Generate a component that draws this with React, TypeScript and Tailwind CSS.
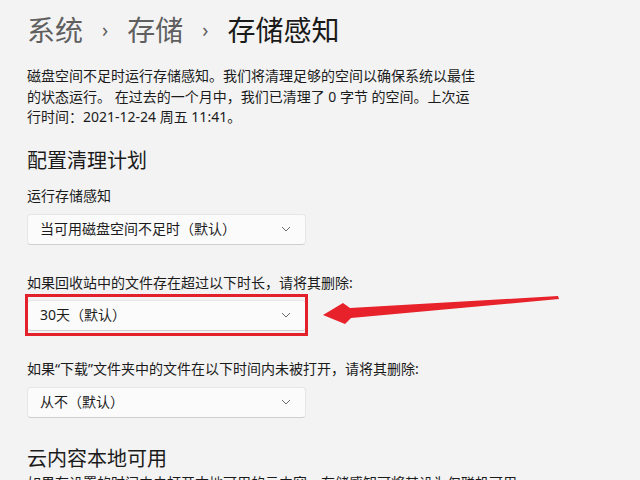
import React from "react";

const font = { fontFamily: '"Noto Sans", "Noto Sans CJK SC", sans-serif' };

function Chevron() {
  return (
    <svg width="10" height="6" viewBox="0 0 10 6" className="shrink-0">
      <path d="M1 1 L5 5 L9 1" fill="none" stroke="#6b6b6b" strokeWidth="1" />
    </svg>
  );
}

function Dropdown({ text }: { text: string }) {
  return (
    <div className="w-[279px] h-[31px] rounded-[4px] bg-[#fbfbfb] border border-[#e6e6e6] border-b-[#cfcfcf] flex items-center justify-between pl-[12px] pr-[14px] text-[14px] text-[#1b1b1b]">
      <span className="leading-[20px]">{text}</span>
      <Chevron />
    </div>
  );
}

export default function App() {
  return (
    <div
      className="relative w-[640px] h-[480px] overflow-hidden bg-[#f3f3f3] pl-[27px] text-[#1b1b1b]"
      style={font}
    >
      <div className="pt-[12px] flex items-center text-[28px] leading-[36px] whitespace-nowrap">
        <span className="text-[#5f5f5f]">系统</span>
        <span className="text-[#5f5f5f] text-[20px] mx-[19px]">›</span>
        <span className="text-[#5f5f5f]">存储</span>
        <span className="text-[#5f5f5f] text-[20px] mx-[19px]">›</span>
        <span className="text-[#1a1a1a]">存储感知</span>
      </div>

      <p className="mt-[18px] text-[14px] leading-[20.5px] whitespace-nowrap">
        磁盘空间不足时运行存储感知。我们将清理足够的空间以确保系统以最佳
        <br />
        的状态运行。 在过去的一个月中，我们已清理了 0 字节 的空间。上次运
        <br />
        行时间：2021-12-24 周五 11:41。
      </p>

      <h2 className="mt-[19px] text-[20px] leading-[28px]">配置清理计划</h2>

      <div className="mt-[11px] text-[14px] leading-[20px]">运行存储感知</div>
      <div className="mt-[8px]">
        <Dropdown text="当可用磁盘空间不足时（默认）" />
      </div>

      <div className="mt-[28px] text-[14px] leading-[20px] whitespace-nowrap">
        如果回收站中的文件存在超过以下时长，请将其删除:
      </div>
      <div className="mt-[7px] relative w-[279px]">
        <Dropdown text="30天（默认）" />
        <div className="absolute top-[-6px] bottom-[-5px] left-[-2px] right-[-2px] border-[3px] border-[#e3212b]" />
      </div>

      <div className="mt-[28px] text-[14px] leading-[20px] whitespace-nowrap">
        如果“下载”文件夹中的文件在以下时间内未被打开，请将其删除:
      </div>
      <div className="mt-[8px]">
        <Dropdown text="从不（默认）" />
      </div>

      <h2 className="mt-[27px] text-[20px] leading-[28px]">云内容本地可用</h2>
      <div className="text-[14px] leading-[20px] whitespace-nowrap">
        如果在设置的时间内未打开本地可用的云内容，存储感知可将其设为仅联机可用。
      </div>

      <svg
        className="absolute left-0 top-0 pointer-events-none"
        width="640"
        height="480"
        viewBox="0 0 640 480"
      >
        <polygon
          points="558,296 350,308 343,303 323,315 345,324 351,318 559,299"
          fill="#e8222b"
        />
      </svg>
    </div>
  );
}
